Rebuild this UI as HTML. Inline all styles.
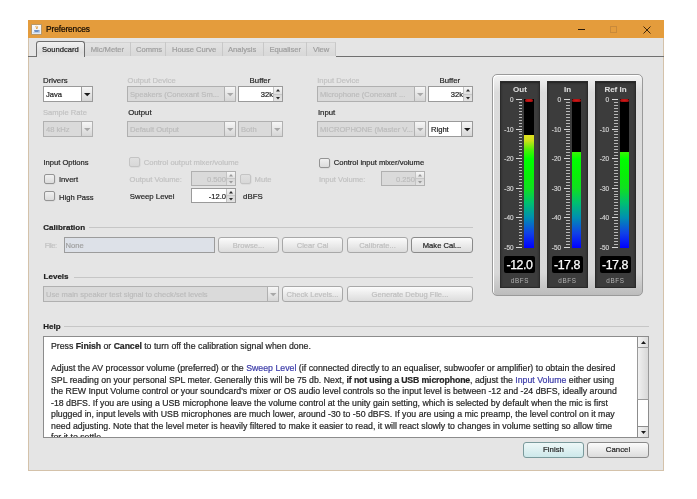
<!DOCTYPE html><html><head><meta charset="utf-8"><style>
html,body{margin:0;padding:0;}
body{width:697px;height:499px;overflow:hidden;background:#fff;position:relative;font-family:"Liberation Sans", sans-serif;}
#w{position:absolute;left:0;top:0;width:697px;height:499px;will-change:transform;}
.t{position:absolute;white-space:nowrap;line-height:1;-webkit-text-stroke:0.2px currentColor;}
.b{position:absolute;box-sizing:border-box;}
</style></head><body><div id="w">
<div class="b" style="left:28px;top:20px;width:636px;height:451px;background:#e5e5e5;border:1px solid #d4c2aa;border-top:none;"></div>
<div class="b" style="left:28px;top:20px;width:636px;height:18px;background:#e49c3c;"></div>
<div class="b" style="left:31px;top:24px;width:11px;height:11px;background:linear-gradient(#fafbfd,#e6ecf4);border:1px solid #b89868;"></div>
<svg style="position:absolute;left:32px;top:25px" width="9" height="9"><path d="M4.2 0.8 C3.2 2 5.2 2.6 4.4 4 M5.6 1.4 C5 2.2 6 2.6 5.4 3.6" stroke="#e0962a" stroke-width="0.9" fill="none"/><path d="M2 5 L7 5 L6.4 7 L2.6 7 Z" fill="#6d8fc0"/><path d="M6.8 5.4 C8 5.4 8 6.6 6.6 6.6" stroke="#6d8fc0" stroke-width="0.7" fill="none"/><path d="M1.2 7.6 L7.8 7.6" stroke="#9ab0d0" stroke-width="0.6"/></svg>
<div class="t" style="left:46.00px;top:25.19px;font-size:8.4px;color:#120a02;font-weight:400;letter-spacing:-0.12px;">Preferences</div>
<div class="b" style="left:578px;top:29px;width:7px;height:1px;background:#2a1a08;"></div>
<div class="b" style="left:610px;top:26px;width:7px;height:7px;border:1px solid #c98a3a;"></div>
<svg style="position:absolute;left:642px;top:25px" width="10" height="10"><path d="M1.5 1.5 L8.5 8.5 M8.5 1.5 L1.5 8.5" stroke="#2a1a08" stroke-width="0.9"/></svg>
<div class="b" style="left:28px;top:56px;width:8px;height:1px;background:#707070;"></div>
<div class="b" style="left:336px;top:56px;width:328px;height:1px;background:#707070;"></div>
<div class="b" style="left:85px;top:42px;width:251px;height:14px;background:linear-gradient(#e2e2e2,#d8d8d8);border-top:1px solid #d2d2d2;border-right:1px solid #c8c8c8;"></div>
<div class="b" style="left:130px;top:42px;width:1px;height:14px;background:#c8c8c8;"></div>
<div class="b" style="left:165px;top:42px;width:1px;height:14px;background:#c8c8c8;"></div>
<div class="b" style="left:222px;top:42px;width:1px;height:14px;background:#c8c8c8;"></div>
<div class="b" style="left:263px;top:42px;width:1px;height:14px;background:#c8c8c8;"></div>
<div class="b" style="left:306px;top:42px;width:1px;height:14px;background:#c8c8c8;"></div>
<div class="b" style="left:36px;top:41px;width:49px;height:16px;background:linear-gradient(#f2f2f2,#dedede 70%,#e5e5e5);border:1px solid #6e6e6e;border-bottom:none;border-radius:3px 3px 0 0;"></div>
<div class="t" style="left:42.00px;top:45.87px;font-size:7.6px;color:#1e1e1e;font-weight:400;">Soundcard</div>
<div class="t" style="left:90.70px;top:45.87px;font-size:7.6px;color:#9e9e9e;font-weight:400;">Mic/Meter</div>
<div class="t" style="left:136.00px;top:45.87px;font-size:7.6px;color:#9e9e9e;font-weight:400;">Comms</div>
<div class="t" style="left:172.00px;top:45.87px;font-size:7.6px;color:#9e9e9e;font-weight:400;">House Curve</div>
<div class="t" style="left:228.00px;top:45.87px;font-size:7.6px;color:#9e9e9e;font-weight:400;">Analysis</div>
<div class="t" style="left:269.40px;top:45.87px;font-size:7.6px;color:#9e9e9e;font-weight:400;">Equaliser</div>
<div class="t" style="left:313.00px;top:45.87px;font-size:7.6px;color:#9e9e9e;font-weight:400;">View</div>
<div class="t" style="left:43.00px;top:76.70px;font-size:7.8px;color:#262626;font-weight:400;">Drivers</div>
<div class="b" style="left:43px;top:86px;width:50px;height:16px;background:#ffffff;border:1px solid #9a9a9a;"></div>
<div class="b" style="left:81px;top:86px;width:12px;height:16px;background:linear-gradient(#f6f6f6,#d6d6d6);border:1px solid #9a9a9a;"></div>
<svg style="position:absolute;left:83.75px;top:93.00px" width="7" height="4"><path d="M0 0 L6.5 0 L3.25 3.3 Z" fill="#1a1a1a"/></svg>
<div class="t" style="left:46.00px;top:90.87px;font-size:7.6px;color:#1e1e1e;font-weight:400;">Java</div>
<div class="t" style="left:43.00px;top:108.87px;font-size:7.6px;color:#c2c2c2;font-weight:400;">Sample Rate</div>
<div class="b" style="left:43px;top:121px;width:50px;height:16px;background:#dadada;border:1px solid #b0b0b0;"></div>
<div class="b" style="left:81px;top:121px;width:12px;height:16px;background:linear-gradient(#f6f6f6,#d6d6d6);border:1px solid #b0b0b0;"></div>
<svg style="position:absolute;left:83.75px;top:128.00px" width="7" height="4"><path d="M0 0 L6.5 0 L3.25 3.3 Z" fill="#a8a8a8"/></svg>
<div class="t" style="left:46.00px;top:125.87px;font-size:7.6px;color:#bcbcbc;font-weight:400;">48 kHz</div>
<div class="t" style="left:127.60px;top:76.87px;font-size:7.6px;color:#c2c2c2;font-weight:400;">Output Device</div>
<div class="b" style="left:127px;top:86px;width:109px;height:16px;background:#dadada;border:1px solid #b0b0b0;"></div>
<div class="b" style="left:224px;top:86px;width:12px;height:16px;background:linear-gradient(#f6f6f6,#d6d6d6);border:1px solid #b0b0b0;"></div>
<svg style="position:absolute;left:226.75px;top:93.00px" width="7" height="4"><path d="M0 0 L6.5 0 L3.25 3.3 Z" fill="#a8a8a8"/></svg>
<div class="t" style="left:130.00px;top:90.87px;font-size:7.6px;color:#bcbcbc;font-weight:400;">Speakers (Conexant Sm...</div>
<div class="t" style="left:249.60px;top:76.70px;font-size:7.8px;color:#262626;font-weight:400;">Buffer</div>
<div class="b" style="left:238px;top:86px;width:45px;height:16px;background:#ffffff;border:1px solid #9a9a9a;"></div>
<div class="b" style="left:273px;top:87px;width:9px;height:14px;background:linear-gradient(#f6f6f6,#e2e2e2 45%,#d8d8d8 55%,#e4e4e4);border-left:1px solid #c4c4c4;"></div>
<div class="b" style="left:274px;top:93.5px;width:8px;height:1px;background:#c8c8c8;"></div>
<svg style="position:absolute;left:276.00px;top:88.60px" width="5" height="3"><path d="M0 2.6 L4 2.6 L2 0 Z" fill="#2a2a2a"/></svg>
<svg style="position:absolute;left:276.00px;top:96.70px" width="5" height="3"><path d="M0 0 L4 0 L2 2.6 Z" fill="#2a2a2a"/></svg>
<div class="t" style="left:238px;top:90.87px;width:35px;text-align:right;font-size:7.6px;color:#1e1e1e">32k</div>
<div class="t" style="left:128.20px;top:108.70px;font-size:7.8px;color:#262626;font-weight:400;">Output</div>
<div class="b" style="left:127px;top:121px;width:109px;height:16px;background:#dadada;border:1px solid #b0b0b0;"></div>
<div class="b" style="left:224px;top:121px;width:12px;height:16px;background:linear-gradient(#f6f6f6,#d6d6d6);border:1px solid #b0b0b0;"></div>
<svg style="position:absolute;left:226.75px;top:128.00px" width="7" height="4"><path d="M0 0 L6.5 0 L3.25 3.3 Z" fill="#a8a8a8"/></svg>
<div class="t" style="left:130.00px;top:125.87px;font-size:7.6px;color:#bcbcbc;font-weight:400;">Default Output</div>
<div class="b" style="left:238px;top:121px;width:45px;height:16px;background:#dadada;border:1px solid #b0b0b0;"></div>
<div class="b" style="left:271px;top:121px;width:12px;height:16px;background:linear-gradient(#f6f6f6,#d6d6d6);border:1px solid #b0b0b0;"></div>
<svg style="position:absolute;left:273.75px;top:128.00px" width="7" height="4"><path d="M0 0 L6.5 0 L3.25 3.3 Z" fill="#a8a8a8"/></svg>
<div class="t" style="left:241.00px;top:125.87px;font-size:7.6px;color:#bcbcbc;font-weight:400;">Both</div>
<div class="t" style="left:317.20px;top:76.87px;font-size:7.6px;color:#c2c2c2;font-weight:400;">Input Device</div>
<div class="b" style="left:317px;top:86px;width:109px;height:16px;background:#dadada;border:1px solid #b0b0b0;"></div>
<div class="b" style="left:414px;top:86px;width:12px;height:16px;background:linear-gradient(#f6f6f6,#d6d6d6);border:1px solid #b0b0b0;"></div>
<svg style="position:absolute;left:416.75px;top:93.00px" width="7" height="4"><path d="M0 0 L6.5 0 L3.25 3.3 Z" fill="#a8a8a8"/></svg>
<div class="t" style="left:320.00px;top:90.87px;font-size:7.6px;color:#bcbcbc;font-weight:400;">Microphone (Conexant ...</div>
<div class="t" style="left:439.50px;top:76.70px;font-size:7.8px;color:#262626;font-weight:400;">Buffer</div>
<div class="b" style="left:428px;top:86px;width:45px;height:16px;background:#ffffff;border:1px solid #9a9a9a;"></div>
<div class="b" style="left:463px;top:87px;width:9px;height:14px;background:linear-gradient(#f6f6f6,#e2e2e2 45%,#d8d8d8 55%,#e4e4e4);border-left:1px solid #c4c4c4;"></div>
<div class="b" style="left:464px;top:93.5px;width:8px;height:1px;background:#c8c8c8;"></div>
<svg style="position:absolute;left:466.00px;top:88.60px" width="5" height="3"><path d="M0 2.6 L4 2.6 L2 0 Z" fill="#2a2a2a"/></svg>
<svg style="position:absolute;left:466.00px;top:96.70px" width="5" height="3"><path d="M0 0 L4 0 L2 2.6 Z" fill="#2a2a2a"/></svg>
<div class="t" style="left:428px;top:90.87px;width:35px;text-align:right;font-size:7.6px;color:#1e1e1e">32k</div>
<div class="t" style="left:317.90px;top:108.70px;font-size:7.8px;color:#262626;font-weight:400;">Input</div>
<div class="b" style="left:317px;top:121px;width:109px;height:16px;background:#dadada;border:1px solid #b0b0b0;"></div>
<div class="b" style="left:414px;top:121px;width:12px;height:16px;background:linear-gradient(#f6f6f6,#d6d6d6);border:1px solid #b0b0b0;"></div>
<svg style="position:absolute;left:416.75px;top:128.00px" width="7" height="4"><path d="M0 0 L6.5 0 L3.25 3.3 Z" fill="#a8a8a8"/></svg>
<div class="t" style="left:320.00px;top:125.87px;font-size:7.6px;color:#bcbcbc;font-weight:400;">MICROPHONE (Master V...</div>
<div class="b" style="left:428px;top:121px;width:45px;height:16px;background:#ffffff;border:1px solid #9a9a9a;"></div>
<div class="b" style="left:461px;top:121px;width:12px;height:16px;background:linear-gradient(#f6f6f6,#d6d6d6);border:1px solid #9a9a9a;"></div>
<svg style="position:absolute;left:463.75px;top:128.00px" width="7" height="4"><path d="M0 0 L6.5 0 L3.25 3.3 Z" fill="#1a1a1a"/></svg>
<div class="t" style="left:431.00px;top:125.87px;font-size:7.6px;color:#1e1e1e;font-weight:400;">Right</div>
<div class="t" style="left:43.40px;top:158.87px;font-size:7.6px;color:#262626;font-weight:400;">Input Options</div>
<div class="b" style="left:44px;top:174px;width:10.5px;height:10px;background:linear-gradient(#f0f0f0,#dcdcdc);border:1px solid #949494;border-radius:2px;box-shadow:0.5px 0.5px 0 rgba(0,0,0,0.08);"></div>
<div class="t" style="left:59.00px;top:175.87px;font-size:7.6px;color:#262626;font-weight:400;">Invert</div>
<div class="b" style="left:44px;top:191px;width:10.5px;height:10px;background:linear-gradient(#f0f0f0,#dcdcdc);border:1px solid #949494;border-radius:2px;box-shadow:0.5px 0.5px 0 rgba(0,0,0,0.08);"></div>
<div class="t" style="left:59.00px;top:193.87px;font-size:7.6px;color:#262626;font-weight:400;">High Pass</div>
<div class="b" style="left:129px;top:157px;width:10.5px;height:10px;background:linear-gradient(#e0e0e0,#d8d8d8);border:1px solid #c4c4c4;border-radius:2px;box-shadow:0.5px 0.5px 0 rgba(0,0,0,0.08);"></div>
<div class="t" style="left:143.80px;top:158.87px;font-size:7.6px;color:#c2c2c2;font-weight:400;">Control output mixer/volume</div>
<div class="t" style="left:129.50px;top:175.87px;font-size:7.6px;color:#c2c2c2;font-weight:400;">Output Volume:</div>
<div class="b" style="left:191px;top:171px;width:45px;height:15px;background:#dadada;border:1px solid #b0b0b0;"></div>
<div class="b" style="left:226px;top:172px;width:9px;height:13px;background:linear-gradient(#f6f6f6,#e2e2e2 45%,#d8d8d8 55%,#e4e4e4);border-left:1px solid #c4c4c4;"></div>
<div class="b" style="left:227px;top:178.0px;width:8px;height:1px;background:#c8c8c8;"></div>
<svg style="position:absolute;left:229.00px;top:173.60px" width="5" height="3"><path d="M0 2.6 L4 2.6 L2 0 Z" fill="#9a9a9a"/></svg>
<svg style="position:absolute;left:229.00px;top:180.70px" width="5" height="3"><path d="M0 0 L4 0 L2 2.6 Z" fill="#9a9a9a"/></svg>
<div class="t" style="left:191px;top:175.87px;width:35px;text-align:right;font-size:7.6px;color:#bcbcbc">0.500</div>
<div class="b" style="left:240px;top:174px;width:10.5px;height:10px;background:linear-gradient(#e0e0e0,#d8d8d8);border:1px solid #c4c4c4;border-radius:2px;box-shadow:0.5px 0.5px 0 rgba(0,0,0,0.08);"></div>
<div class="t" style="left:254.60px;top:175.87px;font-size:7.6px;color:#c2c2c2;font-weight:400;">Mute</div>
<div class="t" style="left:129.80px;top:192.70px;font-size:7.8px;color:#262626;font-weight:400;">Sweep Level</div>
<div class="b" style="left:191px;top:188px;width:45px;height:15px;background:#ffffff;border:1px solid #9a9a9a;"></div>
<div class="b" style="left:226px;top:189px;width:9px;height:13px;background:linear-gradient(#f6f6f6,#e2e2e2 45%,#d8d8d8 55%,#e4e4e4);border-left:1px solid #c4c4c4;"></div>
<div class="b" style="left:227px;top:195.0px;width:8px;height:1px;background:#c8c8c8;"></div>
<svg style="position:absolute;left:229.00px;top:190.60px" width="5" height="3"><path d="M0 2.6 L4 2.6 L2 0 Z" fill="#2a2a2a"/></svg>
<svg style="position:absolute;left:229.00px;top:197.70px" width="5" height="3"><path d="M0 0 L4 0 L2 2.6 Z" fill="#2a2a2a"/></svg>
<div class="t" style="left:191px;top:192.87px;width:35px;text-align:right;font-size:7.6px;color:#1e1e1e">-12.0</div>
<div class="t" style="left:243.10px;top:192.70px;font-size:7.8px;color:#262626;font-weight:400;">dBFS</div>
<div class="b" style="left:319px;top:158px;width:10.5px;height:10px;background:linear-gradient(#f0f0f0,#dcdcdc);border:1px solid #949494;border-radius:2px;box-shadow:0.5px 0.5px 0 rgba(0,0,0,0.08);"></div>
<div class="t" style="left:333.80px;top:158.87px;font-size:7.6px;color:#262626;font-weight:400;">Control input mixer/volume</div>
<div class="t" style="left:319.00px;top:175.87px;font-size:7.6px;color:#c2c2c2;font-weight:400;">Input Volume:</div>
<div class="b" style="left:381px;top:171px;width:44px;height:15px;background:#dadada;border:1px solid #b0b0b0;"></div>
<div class="b" style="left:415px;top:172px;width:9px;height:13px;background:linear-gradient(#f6f6f6,#e2e2e2 45%,#d8d8d8 55%,#e4e4e4);border-left:1px solid #c4c4c4;"></div>
<div class="b" style="left:416px;top:178.0px;width:8px;height:1px;background:#c8c8c8;"></div>
<svg style="position:absolute;left:418.00px;top:173.60px" width="5" height="3"><path d="M0 2.6 L4 2.6 L2 0 Z" fill="#9a9a9a"/></svg>
<svg style="position:absolute;left:418.00px;top:180.70px" width="5" height="3"><path d="M0 0 L4 0 L2 2.6 Z" fill="#9a9a9a"/></svg>
<div class="t" style="left:381px;top:175.87px;width:34px;text-align:right;font-size:7.6px;color:#bcbcbc">0.250</div>
<div class="t" style="left:43.30px;top:223.53px;font-size:8px;color:#1e1e1e;font-weight:700;">Calibration</div>
<div class="b" style="left:89px;top:227px;width:384px;height:1px;background:#c6c6c6;"></div>
<div class="t" style="left:44.80px;top:241.87px;font-size:7.6px;color:#c2c2c2;font-weight:400;letter-spacing:-0.5px;">File:</div>
<div class="b" style="left:64px;top:237px;width:151px;height:16px;background:#dde1e8;border:1px solid #9c9c9c;"></div>
<div class="t" style="left:65.50px;top:241.87px;font-size:7.6px;color:#a0a0a0;font-weight:400;">None</div>
<div class="b" style="left:218px;top:237px;width:61px;height:16px;background:linear-gradient(#fbfbfb,#dcdcdc);border:1px solid #a8a8a8;border-radius:3px;"></div>
<div class="t" style="left:218px;top:241.87px;width:61px;text-align:center;font-size:7.6px;color:#bebebe">Browse...</div>
<div class="b" style="left:282px;top:237px;width:61px;height:16px;background:linear-gradient(#fbfbfb,#dcdcdc);border:1px solid #a8a8a8;border-radius:3px;"></div>
<div class="t" style="left:282px;top:241.87px;width:61px;text-align:center;font-size:7.6px;color:#bebebe">Clear Cal</div>
<div class="b" style="left:347px;top:237px;width:61px;height:16px;background:linear-gradient(#fbfbfb,#dcdcdc);border:1px solid #a8a8a8;border-radius:3px;"></div>
<div class="t" style="left:347px;top:241.87px;width:61px;text-align:center;font-size:7.6px;color:#bebebe">Calibrate...</div>
<div class="b" style="left:411px;top:237px;width:62px;height:16px;background:linear-gradient(#fbfbfb,#dcdcdc);border:1px solid #8a8a8a;border-radius:3px;"></div>
<div class="t" style="left:411px;top:241.87px;width:62px;text-align:center;font-size:7.6px;color:#1e1e1e">Make Cal...</div>
<div class="t" style="left:43.60px;top:272.53px;font-size:8px;color:#1e1e1e;font-weight:700;">Levels</div>
<div class="b" style="left:74px;top:277px;width:399px;height:1px;background:#c6c6c6;"></div>
<div class="b" style="left:43px;top:286px;width:236px;height:16px;background:#dadada;border:1px solid #b0b0b0;"></div>
<div class="b" style="left:267px;top:286px;width:12px;height:16px;background:linear-gradient(#f6f6f6,#d6d6d6);border:1px solid #b0b0b0;"></div>
<svg style="position:absolute;left:269.75px;top:293.00px" width="7" height="4"><path d="M0 0 L6.5 0 L3.25 3.3 Z" fill="#a8a8a8"/></svg>
<div class="t" style="left:46.00px;top:290.87px;font-size:7.6px;color:#bcbcbc;font-weight:400;">Use main speaker test signal to check/set levels</div>
<div class="b" style="left:282px;top:286px;width:61px;height:16px;background:linear-gradient(#fbfbfb,#dcdcdc);border:1px solid #a8a8a8;border-radius:3px;"></div>
<div class="t" style="left:282px;top:290.87px;width:61px;text-align:center;font-size:7.6px;color:#bebebe">Check Levels...</div>
<div class="b" style="left:347px;top:286px;width:126px;height:16px;background:linear-gradient(#fbfbfb,#dcdcdc);border:1px solid #a8a8a8;border-radius:3px;"></div>
<div class="t" style="left:347px;top:290.87px;width:126px;text-align:center;font-size:7.6px;color:#bebebe">Generate Debug File...</div>
<div class="t" style="left:43.30px;top:322.53px;font-size:8px;color:#1e1e1e;font-weight:700;">Help</div>
<div class="b" style="left:64px;top:326px;width:585px;height:1px;background:#c6c6c6;"></div>
<div class="b" style="left:43px;top:336px;width:606px;height:102px;background:#fff;border:1px solid #8c8c8c;border-right:none;"></div>
<div class="b" style="left:44px;top:337px;width:593px;height:100px;overflow:hidden;color:#262626"><div class="t" style="left:7px;top:4.89px;font-size:8.75px;letter-spacing:0px">Press <b style="letter-spacing:-0.1px">Finish</b> or <b style="letter-spacing:-0.1px">Cancel</b> to turn off the calibration signal when done.</div><div class="t" style="left:7px;top:26.89px;font-size:8.75px;letter-spacing:0.015px">Adjust the AV processor volume (preferred) or the <span style="color:#3a3aa8">Sweep Level</span> (if connected directly to an equaliser, subwoofer or amplifier) to obtain the desired</div><div class="t" style="left:7px;top:38.89px;font-size:8.75px;letter-spacing:0px">SPL reading on your personal SPL meter. Generally this will be 75 db. Next, <b style="letter-spacing:-0.15px">if not using a USB microphone</b>, adjust the <span style="color:#3a3aa8">Input Volume</span> either using</div><div class="t" style="left:7px;top:49.89px;font-size:8.75px;letter-spacing:0px">the REW Input Volume control or your soundcard's mixer or OS audio level controls so the input level is between -12 and -24 dBFS, ideally around</div><div class="t" style="left:7px;top:61.89px;font-size:8.75px;letter-spacing:-0.007px">-18 dBFS. If you are using a USB microphone leave the volume control at the unity gain setting, which is selected by default when the mic is first</div><div class="t" style="left:7px;top:72.89px;font-size:8.75px;letter-spacing:0.01px">plugged in, input levels with USB microphones are much lower, around -30 to -50 dBFS. If you are using a mic preamp, the level control on it may</div><div class="t" style="left:7px;top:84.89px;font-size:8.75px;letter-spacing:0.016px">need adjusting. Note that the level meter is heavily filtered to make it easier to read, it will react slowly to changes in volume setting so allow time</div><div class="t" style="left:7px;top:95.89px;font-size:8.75px;letter-spacing:0px">for it to settle.</div></div>
<div class="b" style="left:637px;top:336px;width:12px;height:102px;background:#fff;border:1px solid #8c8c8c;"></div>
<div class="b" style="left:637px;top:336px;width:12px;height:12px;background:linear-gradient(90deg,#f4f4f4,#dcdcdc);border:1px solid #8c8c8c;"></div>
<svg style="position:absolute;left:640.5px;top:340.5px" width="6" height="4"><path d="M0 3 L5 3 L2.5 0 Z" fill="#1a1a1a"/></svg>
<div class="b" style="left:637px;top:347px;width:12px;height:53px;background:linear-gradient(90deg,#f0f0f0,#d8d8d8);border:1px solid #9a9a9a;"></div>
<div class="b" style="left:637px;top:426px;width:12px;height:12px;background:linear-gradient(90deg,#f4f4f4,#dcdcdc);border:1px solid #8c8c8c;"></div>
<svg style="position:absolute;left:640.5px;top:430.5px" width="6" height="4"><path d="M0 0 L5 0 L2.5 3 Z" fill="#1a1a1a"/></svg>
<div class="b" style="left:523px;top:441.5px;width:61px;height:16px;background:linear-gradient(#eef8f8,#cde8ea);border:1px solid #7a9a9c;border-radius:3px;"></div>
<div class="t" style="left:523px;top:445.70px;width:61px;text-align:center;font-size:7.8px;color:#1e1e1e">Finish</div>
<div class="b" style="left:587px;top:441.5px;width:62px;height:16px;background:linear-gradient(#fbfbfb,#dcdcdc);border:1px solid #8a8a8a;border-radius:3px;"></div>
<div class="t" style="left:587px;top:445.70px;width:62px;text-align:center;font-size:7.8px;color:#1e1e1e">Cancel</div>
<div class="b" style="left:492px;top:74px;width:151px;height:222px;background:linear-gradient(#f4f4f4,#dcdcdc 8%,#d8d8d8 90%,#bcbcbc);border:1px solid #9a9a9a;border-radius:5px;box-shadow:inset 1px 1px 0 #fff;"></div>
<div class="b" style="left:499.5px;top:81px;width:40.5px;height:207px;background:#3c3c3c;border:1px solid #2a2a2a;box-shadow:inset 0 1px 2px #222;"></div>
<div class="t" style="left:499.5px;top:85.53px;width:41px;text-align:center;font-size:8px;font-weight:700;color:#dcdcdc;-webkit-text-stroke:0.1px #dcdcdc">Out</div>
<div class="t" style="left:499.5px;top:96.88px;width:14px;text-align:right;font-size:6.4px;color:#cfcfcf">0</div>
<div class="t" style="left:499.5px;top:126.88px;width:14px;text-align:right;font-size:6.4px;color:#cfcfcf">-10</div>
<div class="t" style="left:499.5px;top:155.88px;width:14px;text-align:right;font-size:6.4px;color:#cfcfcf">-20</div>
<div class="t" style="left:499.5px;top:185.88px;width:14px;text-align:right;font-size:6.4px;color:#cfcfcf">-30</div>
<div class="t" style="left:499.5px;top:214.88px;width:14px;text-align:right;font-size:6.4px;color:#cfcfcf">-40</div>
<div class="t" style="left:499.5px;top:244.88px;width:14px;text-align:right;font-size:6.4px;color:#cfcfcf">-50</div>
<div class="b" style="left:516.1px;top:99.00px;width:6px;height:1.2px;background:#d8d8d8"></div><div class="b" style="left:518.6px;top:101.95px;width:3.5px;height:1px;background:#b8b8b8"></div><div class="b" style="left:518.6px;top:104.91px;width:3.5px;height:1px;background:#b8b8b8"></div><div class="b" style="left:518.6px;top:107.86px;width:3.5px;height:1px;background:#b8b8b8"></div><div class="b" style="left:518.6px;top:110.82px;width:3.5px;height:1px;background:#b8b8b8"></div><div class="b" style="left:518.6px;top:113.77px;width:3.5px;height:1px;background:#b8b8b8"></div><div class="b" style="left:518.6px;top:116.72px;width:3.5px;height:1px;background:#b8b8b8"></div><div class="b" style="left:518.6px;top:119.68px;width:3.5px;height:1px;background:#b8b8b8"></div><div class="b" style="left:518.6px;top:122.63px;width:3.5px;height:1px;background:#b8b8b8"></div><div class="b" style="left:518.6px;top:125.59px;width:3.5px;height:1px;background:#b8b8b8"></div><div class="b" style="left:516.1px;top:128.54px;width:6px;height:1.2px;background:#d8d8d8"></div><div class="b" style="left:518.6px;top:131.49px;width:3.5px;height:1px;background:#b8b8b8"></div><div class="b" style="left:518.6px;top:134.45px;width:3.5px;height:1px;background:#b8b8b8"></div><div class="b" style="left:518.6px;top:137.40px;width:3.5px;height:1px;background:#b8b8b8"></div><div class="b" style="left:518.6px;top:140.36px;width:3.5px;height:1px;background:#b8b8b8"></div><div class="b" style="left:518.6px;top:143.31px;width:3.5px;height:1px;background:#b8b8b8"></div><div class="b" style="left:518.6px;top:146.26px;width:3.5px;height:1px;background:#b8b8b8"></div><div class="b" style="left:518.6px;top:149.22px;width:3.5px;height:1px;background:#b8b8b8"></div><div class="b" style="left:518.6px;top:152.17px;width:3.5px;height:1px;background:#b8b8b8"></div><div class="b" style="left:518.6px;top:155.13px;width:3.5px;height:1px;background:#b8b8b8"></div><div class="b" style="left:516.1px;top:158.08px;width:6px;height:1.2px;background:#d8d8d8"></div><div class="b" style="left:518.6px;top:161.03px;width:3.5px;height:1px;background:#b8b8b8"></div><div class="b" style="left:518.6px;top:163.99px;width:3.5px;height:1px;background:#b8b8b8"></div><div class="b" style="left:518.6px;top:166.94px;width:3.5px;height:1px;background:#b8b8b8"></div><div class="b" style="left:518.6px;top:169.90px;width:3.5px;height:1px;background:#b8b8b8"></div><div class="b" style="left:518.6px;top:172.85px;width:3.5px;height:1px;background:#b8b8b8"></div><div class="b" style="left:518.6px;top:175.80px;width:3.5px;height:1px;background:#b8b8b8"></div><div class="b" style="left:518.6px;top:178.76px;width:3.5px;height:1px;background:#b8b8b8"></div><div class="b" style="left:518.6px;top:181.71px;width:3.5px;height:1px;background:#b8b8b8"></div><div class="b" style="left:518.6px;top:184.67px;width:3.5px;height:1px;background:#b8b8b8"></div><div class="b" style="left:516.1px;top:187.62px;width:6px;height:1.2px;background:#d8d8d8"></div><div class="b" style="left:518.6px;top:190.57px;width:3.5px;height:1px;background:#b8b8b8"></div><div class="b" style="left:518.6px;top:193.53px;width:3.5px;height:1px;background:#b8b8b8"></div><div class="b" style="left:518.6px;top:196.48px;width:3.5px;height:1px;background:#b8b8b8"></div><div class="b" style="left:518.6px;top:199.44px;width:3.5px;height:1px;background:#b8b8b8"></div><div class="b" style="left:518.6px;top:202.39px;width:3.5px;height:1px;background:#b8b8b8"></div><div class="b" style="left:518.6px;top:205.34px;width:3.5px;height:1px;background:#b8b8b8"></div><div class="b" style="left:518.6px;top:208.30px;width:3.5px;height:1px;background:#b8b8b8"></div><div class="b" style="left:518.6px;top:211.25px;width:3.5px;height:1px;background:#b8b8b8"></div><div class="b" style="left:518.6px;top:214.21px;width:3.5px;height:1px;background:#b8b8b8"></div><div class="b" style="left:516.1px;top:217.16px;width:6px;height:1.2px;background:#d8d8d8"></div><div class="b" style="left:518.6px;top:220.11px;width:3.5px;height:1px;background:#b8b8b8"></div><div class="b" style="left:518.6px;top:223.07px;width:3.5px;height:1px;background:#b8b8b8"></div><div class="b" style="left:518.6px;top:226.02px;width:3.5px;height:1px;background:#b8b8b8"></div><div class="b" style="left:518.6px;top:228.98px;width:3.5px;height:1px;background:#b8b8b8"></div><div class="b" style="left:518.6px;top:231.93px;width:3.5px;height:1px;background:#b8b8b8"></div><div class="b" style="left:518.6px;top:234.88px;width:3.5px;height:1px;background:#b8b8b8"></div><div class="b" style="left:518.6px;top:237.84px;width:3.5px;height:1px;background:#b8b8b8"></div><div class="b" style="left:518.6px;top:240.79px;width:3.5px;height:1px;background:#b8b8b8"></div><div class="b" style="left:518.6px;top:243.75px;width:3.5px;height:1px;background:#b8b8b8"></div><div class="b" style="left:516.1px;top:246.70px;width:6px;height:1.2px;background:#d8d8d8"></div>
<div class="b" style="left:524.0px;top:98.6px;width:9.5px;height:149.4px;background:#000;"></div>
<div class="b" style="left:524.5px;top:98.6px;width:8.5px;height:3.2px;background:radial-gradient(ellipse at 50% 45%,#d81818,#a01010 75%,#601010);border-radius:1.5px;"></div>
<div class="b" style="left:524.0px;top:134.95px;width:9.5px;height:112.85px;overflow:hidden"><div style="position:absolute;left:0;top:-33.45px;width:9.5px;height:146.30px;background:linear-gradient(#ff2000 0%, #ffa000 12%, #e0e020 22.9%, #cce018 26.5%, #50f008 32.5%, #00ff00 39%, #08f008 50%, #10e020 59%, #00c070 69%, #0090b0 79%, #1040e8 90%, #0000ff 100%)"></div></div>
<div class="b" style="left:504.0px;top:255.5px;width:31px;height:17px;background:#000;border-radius:2px;"></div>
<div class="t" style="left:504.0px;top:259.14px;width:31px;text-align:center;font-size:12.4px;font-weight:400;color:#fff;letter-spacing:-0.45px;-webkit-text-stroke:0.25px #fff">-12.0</div>
<div class="t" style="left:499.5px;top:278.22px;width:41px;text-align:center;font-size:6.3px;letter-spacing:0.65px;color:#b4b4b4;-webkit-text-stroke:0">dBFS</div>
<div class="b" style="left:547px;top:81px;width:40.5px;height:207px;background:#3c3c3c;border:1px solid #2a2a2a;box-shadow:inset 0 1px 2px #222;"></div>
<div class="t" style="left:547px;top:85.53px;width:41px;text-align:center;font-size:8px;font-weight:700;color:#dcdcdc;-webkit-text-stroke:0.1px #dcdcdc">In</div>
<div class="t" style="left:547px;top:96.88px;width:14px;text-align:right;font-size:6.4px;color:#cfcfcf">0</div>
<div class="t" style="left:547px;top:126.88px;width:14px;text-align:right;font-size:6.4px;color:#cfcfcf">-10</div>
<div class="t" style="left:547px;top:155.88px;width:14px;text-align:right;font-size:6.4px;color:#cfcfcf">-20</div>
<div class="t" style="left:547px;top:185.88px;width:14px;text-align:right;font-size:6.4px;color:#cfcfcf">-30</div>
<div class="t" style="left:547px;top:214.88px;width:14px;text-align:right;font-size:6.4px;color:#cfcfcf">-40</div>
<div class="t" style="left:547px;top:244.88px;width:14px;text-align:right;font-size:6.4px;color:#cfcfcf">-50</div>
<div class="b" style="left:563.6px;top:99.00px;width:6px;height:1.2px;background:#d8d8d8"></div><div class="b" style="left:566.1px;top:101.95px;width:3.5px;height:1px;background:#b8b8b8"></div><div class="b" style="left:566.1px;top:104.91px;width:3.5px;height:1px;background:#b8b8b8"></div><div class="b" style="left:566.1px;top:107.86px;width:3.5px;height:1px;background:#b8b8b8"></div><div class="b" style="left:566.1px;top:110.82px;width:3.5px;height:1px;background:#b8b8b8"></div><div class="b" style="left:566.1px;top:113.77px;width:3.5px;height:1px;background:#b8b8b8"></div><div class="b" style="left:566.1px;top:116.72px;width:3.5px;height:1px;background:#b8b8b8"></div><div class="b" style="left:566.1px;top:119.68px;width:3.5px;height:1px;background:#b8b8b8"></div><div class="b" style="left:566.1px;top:122.63px;width:3.5px;height:1px;background:#b8b8b8"></div><div class="b" style="left:566.1px;top:125.59px;width:3.5px;height:1px;background:#b8b8b8"></div><div class="b" style="left:563.6px;top:128.54px;width:6px;height:1.2px;background:#d8d8d8"></div><div class="b" style="left:566.1px;top:131.49px;width:3.5px;height:1px;background:#b8b8b8"></div><div class="b" style="left:566.1px;top:134.45px;width:3.5px;height:1px;background:#b8b8b8"></div><div class="b" style="left:566.1px;top:137.40px;width:3.5px;height:1px;background:#b8b8b8"></div><div class="b" style="left:566.1px;top:140.36px;width:3.5px;height:1px;background:#b8b8b8"></div><div class="b" style="left:566.1px;top:143.31px;width:3.5px;height:1px;background:#b8b8b8"></div><div class="b" style="left:566.1px;top:146.26px;width:3.5px;height:1px;background:#b8b8b8"></div><div class="b" style="left:566.1px;top:149.22px;width:3.5px;height:1px;background:#b8b8b8"></div><div class="b" style="left:566.1px;top:152.17px;width:3.5px;height:1px;background:#b8b8b8"></div><div class="b" style="left:566.1px;top:155.13px;width:3.5px;height:1px;background:#b8b8b8"></div><div class="b" style="left:563.6px;top:158.08px;width:6px;height:1.2px;background:#d8d8d8"></div><div class="b" style="left:566.1px;top:161.03px;width:3.5px;height:1px;background:#b8b8b8"></div><div class="b" style="left:566.1px;top:163.99px;width:3.5px;height:1px;background:#b8b8b8"></div><div class="b" style="left:566.1px;top:166.94px;width:3.5px;height:1px;background:#b8b8b8"></div><div class="b" style="left:566.1px;top:169.90px;width:3.5px;height:1px;background:#b8b8b8"></div><div class="b" style="left:566.1px;top:172.85px;width:3.5px;height:1px;background:#b8b8b8"></div><div class="b" style="left:566.1px;top:175.80px;width:3.5px;height:1px;background:#b8b8b8"></div><div class="b" style="left:566.1px;top:178.76px;width:3.5px;height:1px;background:#b8b8b8"></div><div class="b" style="left:566.1px;top:181.71px;width:3.5px;height:1px;background:#b8b8b8"></div><div class="b" style="left:566.1px;top:184.67px;width:3.5px;height:1px;background:#b8b8b8"></div><div class="b" style="left:563.6px;top:187.62px;width:6px;height:1.2px;background:#d8d8d8"></div><div class="b" style="left:566.1px;top:190.57px;width:3.5px;height:1px;background:#b8b8b8"></div><div class="b" style="left:566.1px;top:193.53px;width:3.5px;height:1px;background:#b8b8b8"></div><div class="b" style="left:566.1px;top:196.48px;width:3.5px;height:1px;background:#b8b8b8"></div><div class="b" style="left:566.1px;top:199.44px;width:3.5px;height:1px;background:#b8b8b8"></div><div class="b" style="left:566.1px;top:202.39px;width:3.5px;height:1px;background:#b8b8b8"></div><div class="b" style="left:566.1px;top:205.34px;width:3.5px;height:1px;background:#b8b8b8"></div><div class="b" style="left:566.1px;top:208.30px;width:3.5px;height:1px;background:#b8b8b8"></div><div class="b" style="left:566.1px;top:211.25px;width:3.5px;height:1px;background:#b8b8b8"></div><div class="b" style="left:566.1px;top:214.21px;width:3.5px;height:1px;background:#b8b8b8"></div><div class="b" style="left:563.6px;top:217.16px;width:6px;height:1.2px;background:#d8d8d8"></div><div class="b" style="left:566.1px;top:220.11px;width:3.5px;height:1px;background:#b8b8b8"></div><div class="b" style="left:566.1px;top:223.07px;width:3.5px;height:1px;background:#b8b8b8"></div><div class="b" style="left:566.1px;top:226.02px;width:3.5px;height:1px;background:#b8b8b8"></div><div class="b" style="left:566.1px;top:228.98px;width:3.5px;height:1px;background:#b8b8b8"></div><div class="b" style="left:566.1px;top:231.93px;width:3.5px;height:1px;background:#b8b8b8"></div><div class="b" style="left:566.1px;top:234.88px;width:3.5px;height:1px;background:#b8b8b8"></div><div class="b" style="left:566.1px;top:237.84px;width:3.5px;height:1px;background:#b8b8b8"></div><div class="b" style="left:566.1px;top:240.79px;width:3.5px;height:1px;background:#b8b8b8"></div><div class="b" style="left:566.1px;top:243.75px;width:3.5px;height:1px;background:#b8b8b8"></div><div class="b" style="left:563.6px;top:246.70px;width:6px;height:1.2px;background:#d8d8d8"></div>
<div class="b" style="left:571.5px;top:98.6px;width:9.5px;height:149.4px;background:#000;"></div>
<div class="b" style="left:572.0px;top:98.6px;width:8.5px;height:3.2px;background:radial-gradient(ellipse at 50% 45%,#d81818,#a01010 75%,#601010);border-radius:1.5px;"></div>
<div class="b" style="left:571.5px;top:152.08px;width:9.5px;height:95.72px;overflow:hidden"><div style="position:absolute;left:0;top:-50.58px;width:9.5px;height:146.30px;background:linear-gradient(#ff2000 0%, #ffa000 12%, #e0e020 22.9%, #cce018 26.5%, #50f008 32.5%, #00ff00 39%, #08f008 50%, #10e020 59%, #00c070 69%, #0090b0 79%, #1040e8 90%, #0000ff 100%)"></div></div>
<div class="b" style="left:551.5px;top:255.5px;width:31px;height:17px;background:#000;border-radius:2px;"></div>
<div class="t" style="left:551.5px;top:259.14px;width:31px;text-align:center;font-size:12.4px;font-weight:400;color:#fff;letter-spacing:-0.45px;-webkit-text-stroke:0.25px #fff">-17.8</div>
<div class="t" style="left:547px;top:278.22px;width:41px;text-align:center;font-size:6.3px;letter-spacing:0.65px;color:#b4b4b4;-webkit-text-stroke:0">dBFS</div>
<div class="b" style="left:595px;top:81px;width:40.5px;height:207px;background:#3c3c3c;border:1px solid #2a2a2a;box-shadow:inset 0 1px 2px #222;"></div>
<div class="t" style="left:595px;top:85.53px;width:41px;text-align:center;font-size:8px;font-weight:700;color:#dcdcdc;-webkit-text-stroke:0.1px #dcdcdc">Ref In</div>
<div class="t" style="left:595px;top:96.88px;width:14px;text-align:right;font-size:6.4px;color:#cfcfcf">0</div>
<div class="t" style="left:595px;top:126.88px;width:14px;text-align:right;font-size:6.4px;color:#cfcfcf">-10</div>
<div class="t" style="left:595px;top:155.88px;width:14px;text-align:right;font-size:6.4px;color:#cfcfcf">-20</div>
<div class="t" style="left:595px;top:185.88px;width:14px;text-align:right;font-size:6.4px;color:#cfcfcf">-30</div>
<div class="t" style="left:595px;top:214.88px;width:14px;text-align:right;font-size:6.4px;color:#cfcfcf">-40</div>
<div class="t" style="left:595px;top:244.88px;width:14px;text-align:right;font-size:6.4px;color:#cfcfcf">-50</div>
<div class="b" style="left:611.6px;top:99.00px;width:6px;height:1.2px;background:#d8d8d8"></div><div class="b" style="left:614.1px;top:101.95px;width:3.5px;height:1px;background:#b8b8b8"></div><div class="b" style="left:614.1px;top:104.91px;width:3.5px;height:1px;background:#b8b8b8"></div><div class="b" style="left:614.1px;top:107.86px;width:3.5px;height:1px;background:#b8b8b8"></div><div class="b" style="left:614.1px;top:110.82px;width:3.5px;height:1px;background:#b8b8b8"></div><div class="b" style="left:614.1px;top:113.77px;width:3.5px;height:1px;background:#b8b8b8"></div><div class="b" style="left:614.1px;top:116.72px;width:3.5px;height:1px;background:#b8b8b8"></div><div class="b" style="left:614.1px;top:119.68px;width:3.5px;height:1px;background:#b8b8b8"></div><div class="b" style="left:614.1px;top:122.63px;width:3.5px;height:1px;background:#b8b8b8"></div><div class="b" style="left:614.1px;top:125.59px;width:3.5px;height:1px;background:#b8b8b8"></div><div class="b" style="left:611.6px;top:128.54px;width:6px;height:1.2px;background:#d8d8d8"></div><div class="b" style="left:614.1px;top:131.49px;width:3.5px;height:1px;background:#b8b8b8"></div><div class="b" style="left:614.1px;top:134.45px;width:3.5px;height:1px;background:#b8b8b8"></div><div class="b" style="left:614.1px;top:137.40px;width:3.5px;height:1px;background:#b8b8b8"></div><div class="b" style="left:614.1px;top:140.36px;width:3.5px;height:1px;background:#b8b8b8"></div><div class="b" style="left:614.1px;top:143.31px;width:3.5px;height:1px;background:#b8b8b8"></div><div class="b" style="left:614.1px;top:146.26px;width:3.5px;height:1px;background:#b8b8b8"></div><div class="b" style="left:614.1px;top:149.22px;width:3.5px;height:1px;background:#b8b8b8"></div><div class="b" style="left:614.1px;top:152.17px;width:3.5px;height:1px;background:#b8b8b8"></div><div class="b" style="left:614.1px;top:155.13px;width:3.5px;height:1px;background:#b8b8b8"></div><div class="b" style="left:611.6px;top:158.08px;width:6px;height:1.2px;background:#d8d8d8"></div><div class="b" style="left:614.1px;top:161.03px;width:3.5px;height:1px;background:#b8b8b8"></div><div class="b" style="left:614.1px;top:163.99px;width:3.5px;height:1px;background:#b8b8b8"></div><div class="b" style="left:614.1px;top:166.94px;width:3.5px;height:1px;background:#b8b8b8"></div><div class="b" style="left:614.1px;top:169.90px;width:3.5px;height:1px;background:#b8b8b8"></div><div class="b" style="left:614.1px;top:172.85px;width:3.5px;height:1px;background:#b8b8b8"></div><div class="b" style="left:614.1px;top:175.80px;width:3.5px;height:1px;background:#b8b8b8"></div><div class="b" style="left:614.1px;top:178.76px;width:3.5px;height:1px;background:#b8b8b8"></div><div class="b" style="left:614.1px;top:181.71px;width:3.5px;height:1px;background:#b8b8b8"></div><div class="b" style="left:614.1px;top:184.67px;width:3.5px;height:1px;background:#b8b8b8"></div><div class="b" style="left:611.6px;top:187.62px;width:6px;height:1.2px;background:#d8d8d8"></div><div class="b" style="left:614.1px;top:190.57px;width:3.5px;height:1px;background:#b8b8b8"></div><div class="b" style="left:614.1px;top:193.53px;width:3.5px;height:1px;background:#b8b8b8"></div><div class="b" style="left:614.1px;top:196.48px;width:3.5px;height:1px;background:#b8b8b8"></div><div class="b" style="left:614.1px;top:199.44px;width:3.5px;height:1px;background:#b8b8b8"></div><div class="b" style="left:614.1px;top:202.39px;width:3.5px;height:1px;background:#b8b8b8"></div><div class="b" style="left:614.1px;top:205.34px;width:3.5px;height:1px;background:#b8b8b8"></div><div class="b" style="left:614.1px;top:208.30px;width:3.5px;height:1px;background:#b8b8b8"></div><div class="b" style="left:614.1px;top:211.25px;width:3.5px;height:1px;background:#b8b8b8"></div><div class="b" style="left:614.1px;top:214.21px;width:3.5px;height:1px;background:#b8b8b8"></div><div class="b" style="left:611.6px;top:217.16px;width:6px;height:1.2px;background:#d8d8d8"></div><div class="b" style="left:614.1px;top:220.11px;width:3.5px;height:1px;background:#b8b8b8"></div><div class="b" style="left:614.1px;top:223.07px;width:3.5px;height:1px;background:#b8b8b8"></div><div class="b" style="left:614.1px;top:226.02px;width:3.5px;height:1px;background:#b8b8b8"></div><div class="b" style="left:614.1px;top:228.98px;width:3.5px;height:1px;background:#b8b8b8"></div><div class="b" style="left:614.1px;top:231.93px;width:3.5px;height:1px;background:#b8b8b8"></div><div class="b" style="left:614.1px;top:234.88px;width:3.5px;height:1px;background:#b8b8b8"></div><div class="b" style="left:614.1px;top:237.84px;width:3.5px;height:1px;background:#b8b8b8"></div><div class="b" style="left:614.1px;top:240.79px;width:3.5px;height:1px;background:#b8b8b8"></div><div class="b" style="left:614.1px;top:243.75px;width:3.5px;height:1px;background:#b8b8b8"></div><div class="b" style="left:611.6px;top:246.70px;width:6px;height:1.2px;background:#d8d8d8"></div>
<div class="b" style="left:619.5px;top:98.6px;width:9.5px;height:149.4px;background:#000;"></div>
<div class="b" style="left:620.0px;top:98.6px;width:8.5px;height:3.2px;background:radial-gradient(ellipse at 50% 45%,#d81818,#a01010 75%,#601010);border-radius:1.5px;"></div>
<div class="b" style="left:619.5px;top:152.08px;width:9.5px;height:95.72px;overflow:hidden"><div style="position:absolute;left:0;top:-50.58px;width:9.5px;height:146.30px;background:linear-gradient(#ff2000 0%, #ffa000 12%, #e0e020 22.9%, #cce018 26.5%, #50f008 32.5%, #00ff00 39%, #08f008 50%, #10e020 59%, #00c070 69%, #0090b0 79%, #1040e8 90%, #0000ff 100%)"></div></div>
<div class="b" style="left:599.5px;top:255.5px;width:31px;height:17px;background:#000;border-radius:2px;"></div>
<div class="t" style="left:599.5px;top:259.14px;width:31px;text-align:center;font-size:12.4px;font-weight:400;color:#fff;letter-spacing:-0.45px;-webkit-text-stroke:0.25px #fff">-17.8</div>
<div class="t" style="left:595px;top:278.22px;width:41px;text-align:center;font-size:6.3px;letter-spacing:0.65px;color:#b4b4b4;-webkit-text-stroke:0">dBFS</div>
</div></body></html>
